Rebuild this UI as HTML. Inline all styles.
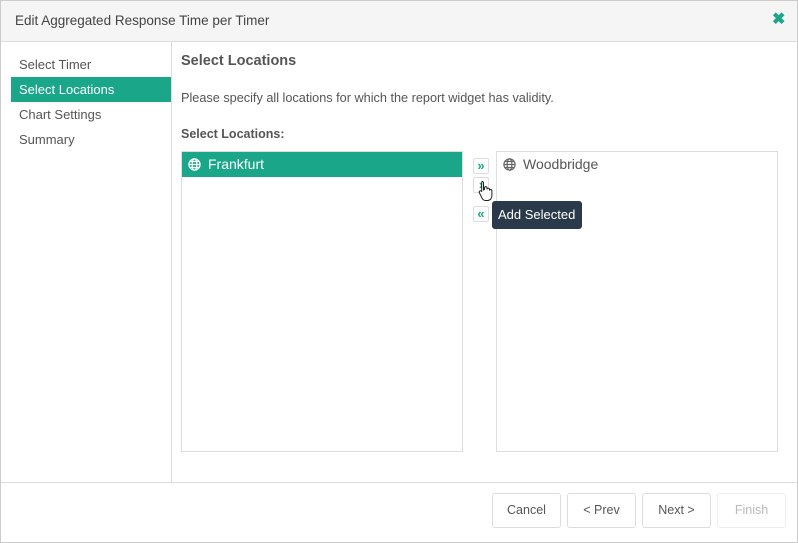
<!DOCTYPE html><html><head><style>
body{margin:0;width:798px;height:543px;font-family:"Liberation Sans",sans-serif;font-size:13px;color:#555;background:#fff;position:relative;overflow:hidden}
.a{position:absolute;box-sizing:border-box}
.btn{position:absolute;top:493px;height:35px;width:69px;border:1px solid #ddd;border-radius:3px;text-align:center;line-height:33px;color:#555;font-size:12.5px;background:#fff;box-sizing:border-box}
.ab{position:absolute;left:473px;width:16px;height:16px;border:1px solid #ddd;border-radius:2px;background:#fff;color:#1aa689;font-size:13px;line-height:13px;text-align:center;font-weight:bold;box-sizing:border-box}
</style></head><body>
<div class="a" style="left:0;top:0;width:798px;height:543px;border:1px solid #ccc"></div>
<div class="a" style="left:1px;top:1px;width:796px;height:41px;background:#f5f5f5;border-bottom:1px solid #ddd"></div>
<div class="a" style="left:15px;top:13px;font-size:13.5px;color:#444">Edit Aggregated Response Time per Timer</div>
<div class="a" style="left:772px;top:9px;color:#1aa689;font-size:16px;font-weight:bold">✖</div>
<div class="a" style="left:171px;top:42px;width:1px;height:440px;background:#ddd"></div>
<div class="a" style="left:19px;top:57px">Select Timer</div>
<div class="a" style="left:11px;top:77px;width:160px;height:25px;background:#1aa689"></div>
<div class="a" style="left:19px;top:82px;color:#fff">Select Locations</div>
<div class="a" style="left:19px;top:107px">Chart Settings</div>
<div class="a" style="left:19px;top:132px">Summary</div>
<div class="a" style="left:181px;top:53px;font-size:14.5px;font-weight:bold;color:#555">Select Locations</div>
<div class="a" style="left:181px;top:91px;font-size:12.7px">Please specify all locations for which the report widget has validity.</div>
<div class="a" style="left:181px;top:127px;font-size:12.5px;font-weight:bold">Select Locations:</div>
<div class="a" style="left:181px;top:151px;width:282px;height:301px;border:1px solid #ddd"></div>
<div class="a" style="left:182px;top:152px;width:280px;height:25px;background:#1aa689"></div>
<svg class="a" style="left:188px;top:158px" width="13" height="13" viewBox="0 0 13 13" fill="none" stroke="#fff" stroke-width="1.2"><circle cx="6.5" cy="6.5" r="5.6"/><ellipse cx="6.5" cy="6.5" rx="2.4" ry="5.6"/><path d="M1 6.5h11M2 3.5h9M2 9.5h9"/></svg>
<div class="a" style="left:208px;top:156px;color:#fff;font-size:14px">Frankfurt</div>
<div class="a" style="left:496px;top:151px;width:282px;height:301px;border:1px solid #ddd"></div>
<svg class="a" style="left:503px;top:158px" width="13" height="13" viewBox="0 0 13 13" fill="none" stroke="#666" stroke-width="1.2"><circle cx="6.5" cy="6.5" r="5.6"/><ellipse cx="6.5" cy="6.5" rx="2.4" ry="5.6"/><path d="M1 6.5h11M2 3.5h9M2 9.5h9"/></svg>
<div class="a" style="left:523px;top:156px;color:#555;font-size:14px">Woodbridge</div>
<div class="ab" style="top:158px">»</div>
<div class="ab" style="top:177px">›</div>
<div class="ab" style="top:206px">«</div>
<svg class="a" style="left:478px;top:180px" width="18" height="22" viewBox="0 0 18 22"><path d="M4 1.5c1 0 1.5.6 1.5 1.5v7l1-.5V8c0-1 .6-1.4 1.3-1.4S9 7 9 8v1.3c.2-.8.7-1.1 1.3-1.1s1.2.4 1.2 1.3v1c.2-.7.7-1 1.2-1 .7 0 1.2.5 1.2 1.4v4.6c0 3-1.8 5-4.5 5H7.5c-1.5 0-2.5-.8-3.3-2L1.5 13c-.5-.8-.3-1.6.3-2 .6-.4 1.3-.2 1.7.4l.2.4V3c0-1 .3-1.5.3-1.5z" fill="#fff" stroke="#222" stroke-width="1"/></svg>
<div class="a" style="left:492px;top:201px;width:90px;height:28px;background:#2b3a4a;border-radius:3px;color:#fff;font-size:13px;line-height:28px;padding-left:6px">Add Selected</div>
<div class="a" style="left:1px;top:482px;width:796px;height:1px;background:#ddd"></div>
<div class="btn" style="left:492px">Cancel</div>
<div class="btn" style="left:567px">&lt; Prev</div>
<div class="btn" style="left:642px">Next &gt;</div>
<div class="btn" style="left:717px;color:#bbb;border-color:#eee">Finish</div>
</body></html>
